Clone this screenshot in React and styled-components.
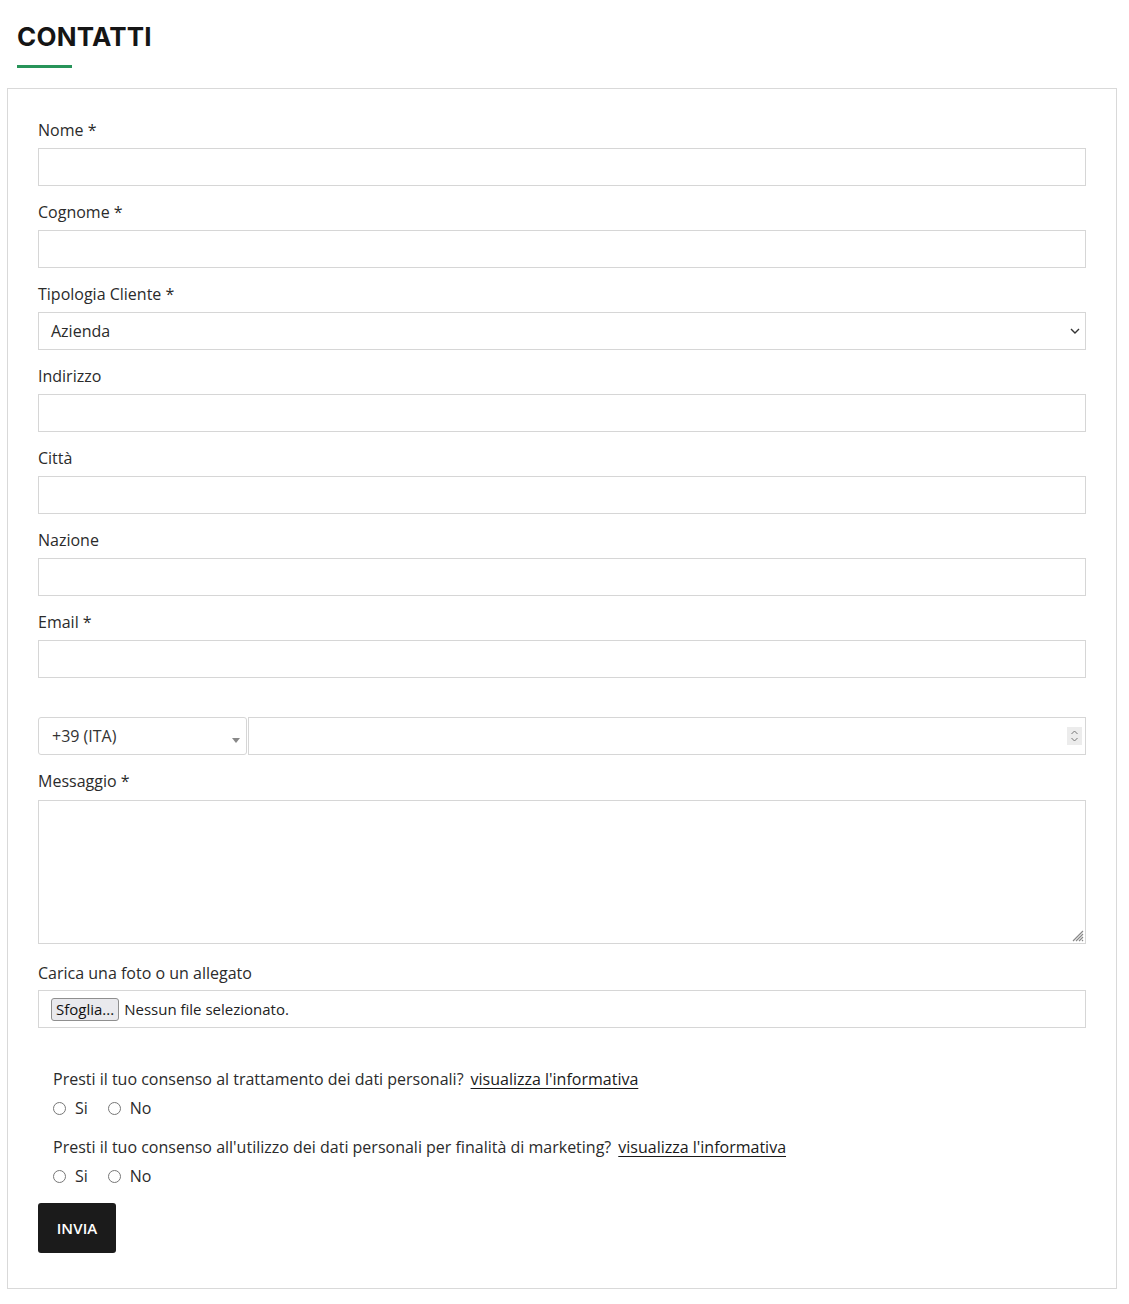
import React from "react";
import styled, { createGlobalStyle } from "styled-components";

const Global = createGlobalStyle`
  html, body { margin: 0; padding: 0; background: #fff; }
  body { font-family: "Open Sans", "Noto Sans", sans-serif; color: #222; }
  * { box-sizing: border-box; }
`;

const Page = styled.div`
  width: 1129px;
  padding: 0 12px 16px 7px;
`;

const Title = styled.h2`
  margin: 0;
  padding: 20px 0 0 10px;
  font-family: "Inter", "Open Sans", sans-serif;
  font-weight: 700;
  font-size: 26px;
  line-height: 34px;
  letter-spacing: 0.2px;
  color: #151515;
`;

const Underline = styled.div`
  margin: 11px 0 20px 10px;
  width: 55px;
  height: 3px;
  background: #279459;
`;

const Card = styled.form`
  border: 1px solid #d9d9d9;
  padding: 30px 30px 35px 30px;
  display: flex;
  flex-direction: column;
`;

const Field = styled.div`
  display: flex;
  flex-direction: column;
  margin-bottom: ${(p) => p.$mb ?? 15}px;
`;

const Label = styled.label`
  font-size: 16px;
  line-height: 22px;
  color: #2b2b2b;
  margin-bottom: ${(p) => p.$mb ?? 7}px;
`;

const Input = styled.input`
  height: 38px;
  width: 100%;
  border: 1px solid #d6d6d6;
  border-radius: 0;
  padding: 0 12px;
  font: inherit;
  font-size: 16px;
  outline: none;
  background: #fff;
`;

const SelectBox = styled.div`
  position: relative;
  height: 38px;
  border: 1px solid #d6d6d6;
  display: flex;
  align-items: center;
  padding: 0 12px;
  font-size: 16px;
  color: #2b2b2b;
  background: #fff;
`;

const Chevron = styled.svg`
  position: absolute;
  right: 5px;
  top: 50%;
  transform: translateY(-50%);
`;

const PhoneRow = styled.div`
  display: flex;
  margin-top: 39px;
  margin-bottom: 15px;
  gap: 1px;
`;

const PrefixSelect = styled.div`
  position: relative;
  width: 209px;
  height: 38px;
  border: 1px solid #d6d6d6;
  border-radius: 3px;
  display: flex;
  align-items: center;
  padding: 0 13px;
  font-size: 16px;
  color: #333;
`;

const Caret = styled.span`
  position: absolute;
  right: 6px;
  top: 20px;
  width: 0;
  height: 0;
  border-left: 4px solid transparent;
  border-right: 4px solid transparent;
  border-top: 5px solid #888;
`;

const NumberBox = styled.div`
  position: relative;
  flex: 1;
  height: 38px;
  border: 1px solid #d6d6d6;
`;

const Spinner = styled.div`
  position: absolute;
  right: 3px;
  top: 9px;
  width: 15px;
  height: 18px;
  background: #ececec;
  display: flex;
  align-items: center;
  justify-content: center;
`;

const TextArea = styled.div`
  position: relative;
  height: 144px;
  border: 1px solid #d6d6d6;
`;

const Grip = styled.svg`
  position: absolute;
  right: 1px;
  bottom: 1px;
`;

const FileBox = styled.div`
  height: 38px;
  border: 1px solid #d6d6d6;
  display: flex;
  align-items: center;
  padding: 0 12px;
  gap: 5px;
  font-family: "Open Sans", "Noto Sans", sans-serif;
  font-size: 15px;
  color: #222;
`;

const FileButton = styled.span`
  display: inline-flex;
  align-items: center;
  height: 23px;
  padding: 0 4px;
  border: 1px solid #8f8f8f;
  border-radius: 3px;
  background: #e9e9ed;
  font-size: 15px;
  color: #111;
`;

const Consent = styled.div`
  padding-left: 15px;
  margin-top: ${(p) => p.$mt ?? 0}px;
`;

const Question = styled.p`
  margin: 0;
  font-size: 16px;
  line-height: 22px;
  color: #2b2b2b;
`;

const Link = styled.a`
  color: #1a1a1a;
  text-decoration: underline;
  text-underline-offset: 3px;
  margin-left: 7px;
`;

const Radios = styled.div`
  display: flex;
  gap: 20px;
  margin-top: 7px;
  height: 22px;
  align-items: center;
`;

const RadioLabel = styled.label`
  display: flex;
  align-items: center;
  gap: 9px;
  font-size: 16px;
  color: #2b2b2b;
`;

const Circle = styled.span`
  width: 13px;
  height: 13px;
  border-radius: 50%;
  border: 1.5px solid #777;
  background: #fff;
`;

const Submit = styled.button`
  align-self: flex-start;
  margin-top: 16px;
  width: 78px;
  height: 50px;
  border: 0;
  border-radius: 3px;
  background: #1b1b1b;
  color: #fff;
  font-family: "Open Sans", sans-serif;
  font-weight: 600;
  font-size: 15px;
  letter-spacing: 0.1px;
`;

const fields1 = [{ label: "Nome *" }, { label: "Cognome *" }];
const fields2 = [
  { label: "Indirizzo" },
  { label: "Città" },
  { label: "Nazione" },
  { label: "Email *" },
];

function Radio({ label }) {
  return (
    <RadioLabel>
      <Circle />
      {label}
    </RadioLabel>
  );
}

export default function App() {
  return (
    <Page>
      <Global />
      <Title>CONTATTI</Title>
      <Underline />
      <Card onSubmit={(e) => e.preventDefault()}>
        {fields1.map((f) => (
          <Field key={f.label}>
            <Label>{f.label}</Label>
            <Input type="text" />
          </Field>
        ))}
        <Field>
          <Label>Tipologia Cliente *</Label>
          <SelectBox>
            Azienda
            <Chevron width="10" height="7" viewBox="0 0 10 7">
              <path d="M1 1.5 L5 5.5 L9 1.5" fill="none" stroke="#333" strokeWidth="1.4" />
            </Chevron>
          </SelectBox>
        </Field>
        {fields2.map((f, i) => (
          <Field key={f.label} $mb={i === fields2.length - 1 ? 0 : 15}>
            <Label>{f.label}</Label>
            <Input type="text" />
          </Field>
        ))}
        <PhoneRow>
          <PrefixSelect>
            +39 (ITA)
            <Caret />
          </PrefixSelect>
          <NumberBox>
            <Spinner>
              <svg width="9" height="14" viewBox="0 0 9 14">
                <path d="M1.5 5 L4.5 2 L7.5 5" fill="none" stroke="#777" strokeWidth="1" />
                <path d="M1.5 9 L4.5 12 L7.5 9" fill="none" stroke="#777" strokeWidth="1" />
              </svg>
            </Spinner>
          </NumberBox>
        </PhoneRow>
        <Field $mb={18}>
          <Label $mb={8}>Messaggio *</Label>
          <TextArea>
            <Grip width="14" height="14" viewBox="0 0 14 14">
              <path d="M13 3 L3 13 M13 6 L6 13 M13 9 L9 13 M13 12 L12 13" stroke="#888" strokeWidth="1.2" />
            </Grip>
          </TextArea>
        </Field>
        <Field $mb={0}>
          <Label $mb={6}>Carica una foto o un allegato</Label>
          <FileBox>
            <FileButton>Sfoglia...</FileButton>
            Nessun file selezionato.
          </FileBox>
        </Field>
        <Consent $mt={40}>
          <Question>
            Presti il tuo consenso al trattamento dei dati personali?
            <Link href="#">visualizza l'informativa</Link>
          </Question>
          <Radios>
            <Radio label="Si" />
            <Radio label="No" />
          </Radios>
        </Consent>
        <Consent $mt={17}>
          <Question>
            Presti il tuo consenso all'utilizzo dei dati personali per finalità di marketing?
            <Link href="#">visualizza l'informativa</Link>
          </Question>
          <Radios>
            <Radio label="Si" />
            <Radio label="No" />
          </Radios>
        </Consent>
        <Submit type="submit">INVIA</Submit>
      </Card>
    </Page>
  );
}
